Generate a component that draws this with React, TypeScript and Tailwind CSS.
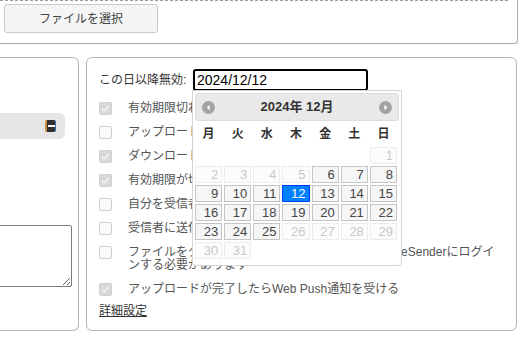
import React from 'react';

const FONT = { fontFamily: '"Liberation Sans", "Noto Sans CJK JP", sans-serif' };

const WEEK = ['月', '火', '水', '木', '金', '土', '日'];

type Cell = { day?: number; state?: 'off' | 'on' | 'sel' };

function buildCells(): Cell[] {
  const cells: Cell[] = [];
  for (let i = 0; i < 6; i++) cells.push({});
  for (let d = 1; d <= 31; d++) {
    let state: Cell['state'] = 'on';
    if (d < 6 || d > 25) state = 'off';
    if (d === 12) state = 'sel';
    cells.push({ day: d, state });
  }
  return cells;
}

function Checkbox({ checked }: { checked: boolean }) {
  if (checked) {
    return (
      <span className="block w-[13px] h-[13px] shrink-0 rounded-[2px] bg-[#d9d9d9] border border-[#d0d0d0] flex items-center justify-center">
        <svg width="9" height="9" viewBox="0 0 10 10">
          <path d="M1.5 5.2 L4 7.6 L8.6 2.2" fill="none" stroke="#f2f2f2" strokeWidth="1.6" />
        </svg>
      </span>
    );
  }
  return <span className="block w-[13px] h-[13px] shrink-0 rounded-[2px] bg-[#fafafa] border border-[#cfcfcf]" />;
}

function NavIcon({ dir }: { dir: 'prev' | 'next' }) {
  return (
    <svg width="13" height="13" viewBox="0 0 13 13">
      <circle cx="6.5" cy="6.5" r="6.5" fill="#a3a3a3" />
      {dir === 'prev' ? (
        <path d="M7.6 3.8 L4.8 6.5 L7.6 9.2 Z" fill="#ffffff" />
      ) : (
        <path d="M5.4 3.8 L8.2 6.5 L5.4 9.2 Z" fill="#ffffff" />
      )}
    </svg>
  );
}

function Calendar() {
  const cells = buildCells();
  return (
    <div className="absolute left-[-1px] top-[21px] z-10 w-[210px] h-[176px] bg-white border border-[#d4d4d4] rounded-b-[4px] p-[2px]">
      {/* Title bar */}
      <div className="relative h-[28px] bg-[#e9e9e9] border border-[#dddddd] rounded-[3px] flex items-center justify-center">
        <span className="absolute left-[6px] top-[7px]"><NavIcon dir="prev" /></span>
        <span className="text-[13px] font-bold text-[#333333]">2024年 12月</span>
        <span className="absolute right-[6px] top-[7px]"><NavIcon dir="next" /></span>
      </div>

      {/* Weekdays */}
      <div className="grid grid-cols-7 gap-x-[2px] w-[202px] mt-[5px] h-[16px]">
        {WEEK.map((w) => (
          <div key={w} className="text-center text-[12px] font-bold text-[#333333] leading-[16px]">{w}</div>
        ))}
      </div>

      {/* Days */}
      <div className="grid grid-cols-7 gap-x-[2px] gap-y-[2px] w-[202px] mt-[5px]">
        {cells.map((c, i) => {
          if (!c.day) return <div key={i} className="h-[17px]" />;
          let cls = 'border-[#c5c5c5] bg-[#f6f6f6] text-[#454545]';
          if (c.state === 'off') cls = 'border-[#ececec] bg-[#fcfcfc] text-[#c8c8c8]';
          if (c.state === 'sel') cls = 'border-[#003eff] bg-[#007fff] text-white';
          return (
            <div key={i} className={`h-[17px] border text-right pr-[3px] text-[13px] leading-[15px] ${cls}`}>
              {c.day}
            </div>
          );
        })}
      </div>
    </div>
  );
}

const OPTIONS: { text: React.ReactNode; checked: boolean }[] = [
  { text: '有効期限切れの通知を受け取る', checked: true },
  { text: 'アップロードの完了を通知する', checked: false },
  { text: 'ダウンロードの通知を受け取る', checked: true },
  { text: '有効期限が切れる前に通知する', checked: true },
  { text: '自分を受信者に追加する', checked: false },
  { text: '受信者に送信するメール', checked: false },
  {
    text: (
      <>
        ファイルをダウンロードするためには受信者が{'\u2002\u2009'}FileSenderにログイ
        <br />
        ンする必要があります
      </>
    ),
    checked: false,
  },
  { text: 'アップロードが完了したらWeb Push通知を受ける', checked: true },
];

export default function App() {
  return (
    <div className="w-[521px] h-[343px] overflow-hidden bg-white text-[12px] text-[#444444]" style={FONT}>
      {/* Upload box */}
      <div className="w-[518px] h-[44px] border-b border-r border-[#a9a9a9] rounded-br-[4px]">
        <div className="w-[508px] border-t border-dashed border-[#9a9a9a]" />
        <button className="ml-[4px] mt-[3px] w-[154px] h-[29px] bg-[#f5f5f5] border border-[#c9c9c9] rounded-[3px] text-[12px] text-[#444444]">
          ファイルを選択
        </button>
      </div>

      {/* Panels */}
      <div className="mt-[13px] flex gap-[7px]">
        {/* Left panel */}
        <div className="w-[79px] h-[274px] shrink-0 border-t border-r border-b border-[#b5b5b5] rounded-r-[6px] flex flex-col">
          <div className="mt-[55px] w-[65px] h-[26px] bg-[#e6e6e6] rounded-r-[6px] flex items-center justify-end pr-[9px]">
            <span className="w-[11px] h-[12px] rounded-[2px] bg-[#2f2f2f] border-l-2 border-l-[#c98a3a] border-r border-r-[#3a6fb0] flex items-center justify-center">
              <span className="w-[7px] h-[2px] bg-white" />
            </span>
          </div>
          <textarea className="mt-[86px] ml-[-6px] w-[78px] h-[62px] border border-[#7a7a7a] rounded-[2px] resize" readOnly />
        </div>

        {/* Right panel */}
        <div className="w-[431px] h-[274px] shrink-0 border border-[#b5b5b5] rounded-[6px] pt-[11px] pl-[12px] pr-[8px]">
          <div className="flex items-center">
            <span className="w-[94px] shrink-0 whitespace-nowrap text-[#333333]">この日以降無効:</span>
            <div className="relative shrink-0">
              <div className="w-[175px] h-[22px] border-2 border-black rounded-[3px] pl-[2px] text-[14px] leading-[18px] text-black">
                2024/12/12
              </div>
              <Calendar />
            </div>
          </div>

          <div className="mt-[11px] flex flex-col">
            {OPTIONS.map((o, i) => (
              <div key={i} className="flex items-start mb-[11px]">
                <span className="shrink-0"><Checkbox checked={o.checked} /></span>
                <span className="ml-[16px] leading-[13px] whitespace-nowrap text-[#555555]">{o.text}</span>
              </div>
            ))}
          </div>
          <a className="block mt-[-3px] underline text-[#333333] leading-[14px]">詳細設定</a>
        </div>
      </div>
    </div>
  );
}
